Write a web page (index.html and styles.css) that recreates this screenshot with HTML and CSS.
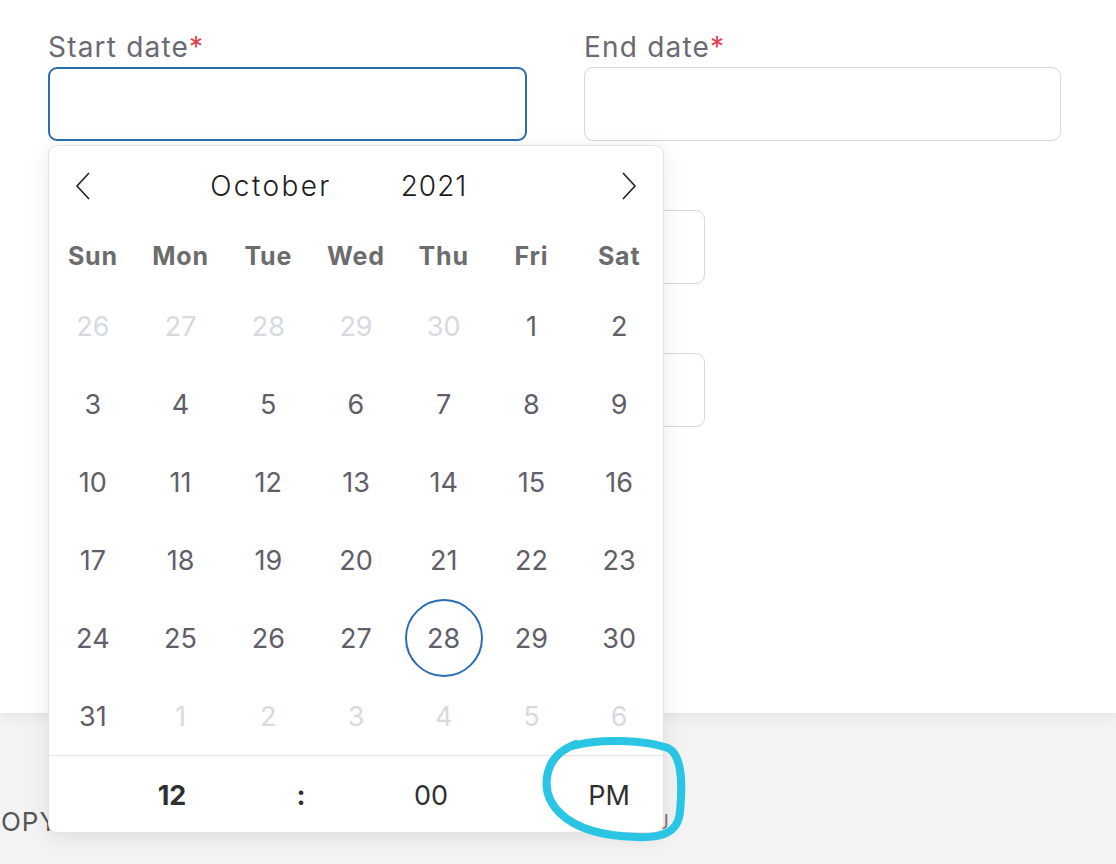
FILE: index.html
```html
<!DOCTYPE html>
<html lang="en">
<head>
<meta charset="utf-8">
<title>Date picker</title>
<link rel="stylesheet" href="styles.css">
</head>
<body>
<div class="page">
  <main class="content">
    <div class="row-two">
      <div class="field field-start">
        <label class="label">Start date<span class="req">*</span></label>
        <div class="input input-focused"></div>
        <div class="picker">
          <div class="picker-head">
            <button class="nav nav-prev" aria-label="Previous month">
              <svg width="16" height="28" viewBox="0 0 16 28"><polyline points="14,1 2,14 14,27" fill="none" stroke="#222" stroke-width="1.6"/></svg>
            </button>
            <div class="head-mid">
              <span class="month">October</span>
              <span class="year">2021</span>
            </div>
            <button class="nav nav-next" aria-label="Next month">
              <svg width="16" height="28" viewBox="0 0 16 28"><polyline points="2,1 14,14 2,27" fill="none" stroke="#222" stroke-width="1.6"/></svg>
            </button>
          </div>
          <div class="weekdays">
            <span>Sun</span><span>Mon</span><span>Tue</span><span>Wed</span><span>Thu</span><span>Fri</span><span>Sat</span>
          </div>
          <div class="days">
            <span class="day muted">26</span><span class="day muted">27</span><span class="day muted">28</span><span class="day muted">29</span><span class="day muted">30</span><span class="day">1</span><span class="day">2</span>
            <span class="day">3</span><span class="day">4</span><span class="day">5</span><span class="day">6</span><span class="day">7</span><span class="day">8</span><span class="day">9</span>
            <span class="day">10</span><span class="day">11</span><span class="day">12</span><span class="day">13</span><span class="day">14</span><span class="day">15</span><span class="day">16</span>
            <span class="day">17</span><span class="day">18</span><span class="day">19</span><span class="day">20</span><span class="day">21</span><span class="day">22</span><span class="day">23</span>
            <span class="day">24</span><span class="day">25</span><span class="day">26</span><span class="day">27</span><span class="day today"><span class="ring">28</span></span><span class="day">29</span><span class="day">30</span>
            <span class="day">31</span><span class="day muted">1</span><span class="day muted">2</span><span class="day muted">3</span><span class="day muted">4</span><span class="day muted">5</span><span class="day muted">6</span>
          </div>
          <div class="time">
            <span class="hour">12</span>
            <span class="colon">:</span>
            <span class="minute">00</span>
            <span class="ampm">PM</span>
          </div>
        </div>
      </div>
      <div class="field">
        <label class="label">End date<span class="req">*</span></label>
        <div class="input"></div>
      </div>
    </div>
    <div class="field field-wide">
      <div class="label-space"></div>
      <div class="input"></div>
    </div>
    <div class="field field-wide">
      <div class="label-space"></div>
      <div class="input"></div>
    </div>
  </main>
  <footer class="footer">
    <span class="copy">COPY</span>
    <span class="tail">J</span>
  </footer>
</div>
<svg class="annotation" width="1116" height="864" viewBox="0 0 1116 864" aria-hidden="true">
  <path d="M 572 746 C 600 738, 645 740, 668 748 C 684 756, 682 790, 680 812 C 678 834, 660 838, 636 837 C 604 836, 578 830, 561 814 C 546 800, 545 784, 548 772 C 551 760, 560 750, 576 744" fill="none" stroke="#2ac4e4" stroke-width="8" stroke-linecap="round" stroke-linejoin="round"/>
</svg>
</body>
</html>
```

FILE: styles.css
```css
* { box-sizing: border-box; }

html, body {
  margin: 0;
  padding: 0;
  background: #f3f3f4;
}

body {
  font-family: "Inter", "Liberation Sans", sans-serif;
  width: 1116px;
  height: 864px;
  overflow: hidden;
  position: relative;
}

.page {
  display: flex;
  flex-direction: column;
  height: 864px;
}

.content {
  height: 713px;
  background: #ffffff;
  padding: 29px 48px 0 48px;
  display: flex;
  flex-direction: column;
  gap: 31px;
  position: relative;
  z-index: 1;
  box-shadow: 0 3px 14px rgba(0, 0, 0, 0.07);
}

.row-two {
  display: grid;
  grid-template-columns: 479px 477px;
  column-gap: 57px;
}

.field {
  display: flex;
  flex-direction: column;
}

.field-start {
  position: relative;
  z-index: 5;
}

.field-wide {
  width: 657px;
}

.label {
  font-size: 28px;
  line-height: 36px;
  color: #6a6974;
  margin-bottom: 2px;
  letter-spacing: 1.2px;
}

.label-space {
  height: 36px;
  margin-bottom: 2px;
}

.req {
  color: #e0444c;
}

.input {
  height: 74px;
  border: 1.5px solid #d7d7dd;
  border-radius: 9px;
  background: #fff;
}

.input-focused {
  border: 2px solid #2c6db2;
}

/* Date picker popup */
.picker {
  position: absolute;
  top: calc(100% + 4px);
  left: 0;
  width: 616px;
  height: 688px;
  background: #fff;
  border: 1px solid #e3e3e7;
  border-radius: 9px;
  box-shadow: 0 4px 22px rgba(0, 0, 0, 0.09);
  display: flex;
  flex-direction: column;
  overflow: hidden;
}

.picker-head {
  height: 79px;
  display: flex;
  align-items: center;
}

.nav {
  width: 68px;
  height: 79px;
  border: 0;
  background: transparent;
  padding: 0;
  display: flex;
  align-items: center;
  justify-content: center;
}

.head-mid {
  flex: 1;
  display: flex;
  align-items: center;
  padding-left: 74px;
  font-size: 28px;
  font-weight: 300;
  color: #1d1d1f;
}

.month {
  width: 160px;
  text-align: center;
  letter-spacing: 2.4px;
}

.year {
  width: 100px;
  margin-left: 33px;
  text-align: center;
  letter-spacing: 1px;
}

.weekdays {
  height: 62px;
  display: grid;
  grid-template-columns: repeat(7, 1fr);
  align-items: center;
  justify-items: center;
  font-size: 25px;
  font-weight: 700;
  color: #6c6c6e;
  letter-spacing: 0.8px;
}

.days {
  display: grid;
  grid-template-columns: repeat(7, 1fr);
  grid-auto-rows: 78px;
}

.day {
  display: flex;
  align-items: center;
  justify-content: center;
  font-size: 27px;
  color: #5f5e69;
}

.day.muted {
  color: #d6dae1;
}

.ring {
  width: 78px;
  height: 78px;
  border-radius: 50%;
  border: 2px solid #2c6db2;
  display: flex;
  align-items: center;
  justify-content: center;
}

.time {
  flex: 1;
  border-top: 1px solid #e4e4e8;
  display: grid;
  grid-template-columns: 246px 12px 248px 1fr;
  align-items: center;
  justify-items: center;
  font-size: 27px;
  color: #2f2f31;
  padding-top: 3px;
}

.hour {
  font-weight: 700;
}

.colon {
  font-weight: 700;
}

/* Footer */
.footer {
  flex: 1;
  display: flex;
  align-items: center;
  padding-top: 66px;
  font-size: 26px;
  color: #555558;
  letter-spacing: 1px;
}

.copy {
  margin-left: -19px;
}

.tail {
  margin-left: auto;
  margin-right: 446px;
  color: #777;
  font-size: 20px;
}

.annotation {
  position: absolute;
  left: 0;
  top: 0;
  pointer-events: none;
  z-index: 10;
}
```
